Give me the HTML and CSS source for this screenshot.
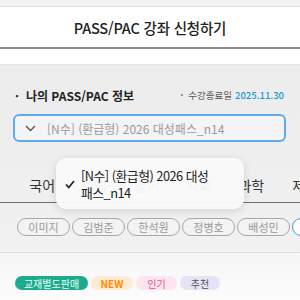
FILE: index.html
```html
<!DOCTYPE html>
<html lang="ko">
<head>
<meta charset="utf-8">
<link rel="stylesheet" href="styles.css">
</head>
<body>
<div class="page">
  <div class="topbar"></div>
  <header class="header"><h1 class="title">PASS/PAC 강좌 신청하기</h1></header>
  <div class="gap-strip"></div>
  <section class="info">
    <div class="info-row">
      <div class="info-title"><span class="dot">·</span>나의 PASS/PAC 정보</div>
      <div class="info-date"><span class="dot small">·</span>수강종료일 <span class="date">2025.11.30</span></div>
    </div>
    <div class="select">
      <svg class="chev" width="11" height="7" viewBox="0 0 11 7"><polyline points="1,1 5.5,5.5 10,1" fill="none" stroke="#555" stroke-width="1.4"/></svg>
      <span class="select-text">[N수] (환급형) 2026 대성패스_n14</span>
    </div>
    <nav class="tabs">
      <span class="tab">국어</span>
      <span class="tab">수학</span>
      <span class="tab">영어</span>
      <span class="tab">사회</span>
      <span class="tab">과학</span>
      <span class="tab tab-last">제2외국어</span>
    </nav>
    <div class="chips">
      <span class="chip">이미지</span>
      <span class="chip">김범준</span>
      <span class="chip">한석원</span>
      <span class="chip">정병호</span>
      <span class="chip">배성민</span>
      <span class="chip chip-blue">전체</span>
    </div>
  </section>
  <section class="list">
    <div class="badges">
      <span class="badge b-teal">교재별도판매</span>
      <span class="badge b-new">NEW</span>
      <span class="badge b-hot">인기</span>
      <span class="badge b-rec">추천</span>
    </div>
  </section>
  <div class="popup">
    <svg class="check" width="10" height="9" viewBox="0 0 10 9"><polyline points="1,4.5 3.8,7.5 9,1" fill="none" stroke="#222" stroke-width="1.7"/></svg>
    <span class="popup-text">[N수] (환급형) 2026 대성<br>패스_n14</span>
  </div>
</div>
</body>
</html>
```
FILE: styles.css
```css
* { box-sizing: border-box; margin: 0; padding: 0; }
html, body { width: 300px; height: 300px; overflow: hidden; }
body { font-family: "Noto Sans CJK KR", "Noto Sans", sans-serif; color: #222; background: #fafafa; }
.page { position: relative; width: 300px; height: 300px; overflow: hidden; }
.topbar { height: 7px; background: #f4f4f4; border-bottom: 1px solid #dedede; }
.header { height: 42px; background: #fff; border-bottom: 2px solid #8e8e8e; display: flex; align-items: center; justify-content: center; }
.title { font-size: 14.5px; font-weight: 500; color: #222; letter-spacing: -0.2px; }
.gap-strip { height: 16px; background: #fff; border-bottom: 1px solid #e6e6e6; }
.info { background: linear-gradient(#ececec, #f1f1f1); padding-top: 22px; border-bottom: 1px solid #dcdcdc; height: 188px; }
.info-row { display: flex; justify-content: space-between; align-items: center; padding: 0 16px 0 15px; height: 16px; }
.info-title { font-size: 12px; font-weight: 700; color: #222; display: flex; align-items: center; }
.dot { font-weight: 700; margin-right: 7px; }
.info-date { font-size: 9.5px; color: #555; display: flex; align-items: center; }
.dot.small { margin-right: 5px; }
.date { color: #1a98d5; font-weight: 500; margin-left: 3px; }
.select { margin: 11px 14px 0 13px; height: 28px; border: 2px solid #5eaaed; border-radius: 6px; background: #f4f4f4; display: flex; align-items: center; padding-left: 10px; }
.chev { margin-right: 11px; }
.select-text { font-size: 12px; color: #9a9a9a; }
.tabs { display: flex; margin-top: 33px; padding-left: 16px; border-bottom: 1px solid #6e6e6e; white-space: nowrap; height: 28px; }
.tab { font-size: 14px; color: #333; width: 52.3px; text-align: center; line-height: 20px; flex: none; }
.tab-last { width: auto; margin-left: 15px; text-align: left; }
.chips { display: flex; gap: 2px; margin-top: 15px; padding-left: 17px; white-space: nowrap; }
.chip { flex: none; width: 53px; height: 18px; border: 1px solid #a8a8a8; border-radius: 9px; background: #f3f3f3; font-size: 11px; color: #999; display: flex; align-items: center; justify-content: center; }
.chip-blue { border-color: #3a9be0; color: #3a9be0; background: #fff; }
.list { background: linear-gradient(#f6f6f6, #fcfcfc); height: 48px; padding-top: 23px; }
.badges { display: flex; gap: 3px; padding-left: 15px; }
.badge { height: 14px; border-radius: 7px; font-size: 10px; display: flex; align-items: center; justify-content: center; }
.b-teal { width: 73px; background: #1dab8d; color: #e8fff8; }
.b-new { width: 42px; background: #ffebd3; color: #ff8a00; font-weight: 700; }
.b-hot { width: 41px; background: #fde4ee; color: #e6508a; }
.b-rec { width: 40px; background: #e7e3f6; color: #555; }
.popup { position: absolute; left: 56px; top: 158px; width: 188px; height: 51px; background: rgba(249,249,249,0.97); border-radius: 10px; box-shadow: 0 2px 10px rgba(0,0,0,0.12); display: flex; align-items: center; padding-left: 9px; }
.check { flex: none; margin-right: 6px; margin-top: 2px; }
.popup-text { font-size: 12.8px; line-height: 17px; color: #222; letter-spacing: -0.5px; white-space: nowrap; }
```
